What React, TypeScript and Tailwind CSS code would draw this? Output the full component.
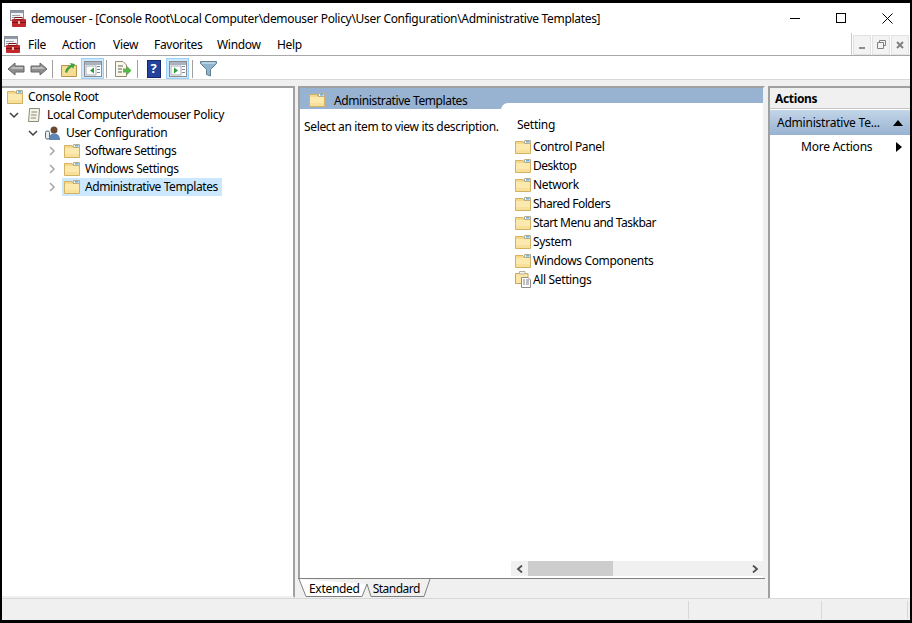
import React from 'react';

const font = { fontFamily: '"Noto Sans", sans-serif' };

function Folder({ className = '' }: { className?: string }) {
  return (
    <svg width="16" height="14" viewBox="0 0 16 14" className={className}>
      <path d="M0.5 1.5 H8 L9 3 H15.5 V13.5 H0.5 Z" fill="#f4d98c" stroke="#d2b263" />
      <rect x="1" y="4" width="14" height="9" fill="#fbe9ae" />
      <rect x="1" y="10" width="14" height="3" fill="#f8e09a" />
      <path d="M9.5 0.5 H15.5 V3.5 H9.5 Z" fill="#f7f7f2" stroke="#b9ad8a" />
      <rect x="11" y="1" width="3.5" height="1.6" fill="#6bb2e6" />
    </svg>
  );
}

function Chevron({ open }: { open?: boolean }) {
  return (
    <svg width="10" height="10" viewBox="0 0 10 10" className="shrink-0 ml-px">
      {open ? (
        <path d="M1 3 L5 7 L9 3" fill="none" stroke="#404040" strokeWidth="1.5" />
      ) : (
        <path d="M3 1 L7 5 L3 9" fill="none" stroke="#a6a6a6" strokeWidth="1.5" />
      )}
    </svg>
  );
}

function AppIcon({ className = '' }: { className?: string }) {
  return (
    <svg width="16" height="17" viewBox="0 0 16 17" className={className}>
      <rect x="0.5" y="0.5" width="13" height="10" fill="#f2f2f2" stroke="#8a8f98" />
      <rect x="1" y="1" width="12" height="2" fill="#8f99a8" />
      <rect x="2" y="5" width="8" height="1" fill="#9aa3ae" />
      <rect x="2" y="7" width="6" height="1" fill="#9aa3ae" />
      <rect x="2" y="9" width="14" height="8" rx="1" fill="#c0282d" />
      <rect x="5" y="7.5" width="7" height="2" fill="none" stroke="#7d1518" />
      <rect x="2" y="12" width="14" height="1" fill="#7d1518" />
      <rect x="8" y="11" width="2" height="3" fill="#f0c0b0" />
    </svg>
  );
}

function Sep({ className = '' }: { className?: string }) {
  return <div className={`w-px h-[18px] bg-[#a0a0a0] ${className}`} />;
}

function Arrow({ flip }: { flip?: boolean }) {
  return (
    <svg width="18" height="14" viewBox="0 0 18 14" className={flip ? 'scale-x-[-1]' : ''}>
      <path d="M1 7 L8 1 V4 H17 V10 H8 V13 Z" fill="#8f8f8f" stroke="#666666" />
      <path d="M3 7 L7 4 V5 H16 V7 Z" fill="#bdbdbd" />
    </svg>
  );
}

function ConsoleTree({ right }: { right?: boolean }) {
  return (
    <svg width="18" height="16" viewBox="0 0 18 16">
      <rect x="0.5" y="0.5" width="17" height="15" fill="#fff" stroke="#8c8c8c" />
      <rect x="1" y="1" width="16" height="3" fill="#a9b4c0" />
      <rect x="2" y="5" width="10" height="9" fill="#fff" stroke="#a3adb8" />
      <rect x="13" y="5" width="3" height="1" fill="#7c8a99" />
      <rect x="13" y="8" width="3" height="1" fill="#7c8a99" />
      <rect x="13" y="11" width="3" height="1" fill="#7c8a99" />
      {right ? <path d="M5 6.5 L9 9.5 L5 12.5 Z" fill="#2c9c3a" /> : <path d="M10 6.5 L6 9.5 L10 12.5 Z" fill="#2c9c3a" />}
    </svg>
  );
}

function TreeRow({ indent, chev, icon, label, selected, tracking = 'tracking-[-0.33px]' }: { indent: string; chev?: 'open' | 'closed'; icon: React.ReactNode; label: string; selected?: boolean; tracking?: string }) {
  return (
    <div className={`flex items-center h-[18px] ${indent}`}>
      {chev ? <div className="w-[16px] shrink-0 flex"><Chevron open={chev === 'open'} /></div> : null}
      <div className={`flex items-center h-[18px] pl-[1px] pr-[4px] ${selected ? 'bg-[#cce8ff]' : ''}`}>
        <div className="w-[22px] shrink-0 flex items-center justify-end pr-[5px]">{icon}</div>
        <span className={`whitespace-nowrap text-[12px] text-black ${tracking}`}>{label}</span>
      </div>
    </div>
  );
}

const settings = [
  { name: 'Control Panel', tracking: 'tracking-[-0.36px]' },
  { name: 'Desktop', tracking: 'tracking-[-0.48px]' },
  { name: 'Network', tracking: 'tracking-[-0.36px]' },
  { name: 'Shared Folders', tracking: 'tracking-[-0.5px]' },
  { name: 'Start Menu and Taskbar', tracking: 'tracking-[-0.5px]' },
  { name: 'System', tracking: 'tracking-[-0.36px]' },
  { name: 'Windows Components', tracking: 'tracking-[-0.36px]' },
];

export default function App() {
  return (
    <div className="w-[912px] h-[623px] bg-black pt-[3px] pb-[3px] px-[2px] overflow-hidden" style={font}>
      <div className="w-full h-full flex flex-col bg-[#f0f0f0]">
        {/* title bar */}
        <div className="h-[30px] shrink-0 bg-white flex items-center pl-[8px]">
          <AppIcon />
          <span className="ml-[5px] mt-[2px] text-[12px] tracking-[-0.31px] text-black whitespace-nowrap">demouser - [Console Root\Local Computer\demouser Policy\User Configuration\Administrative Templates]</span>
          <div className="ml-auto flex items-center h-full">
            <div className="w-[46px] flex justify-center"><div className="w-[10px] h-px bg-black" /></div>
            <div className="w-[46px] flex justify-center"><div className="w-[10px] h-[10px] border border-black" /></div>
            <div className="w-[46px] flex justify-center">
              <svg width="11" height="11" viewBox="0 0 11 11"><path d="M0.5 0.5 L10.5 10.5 M10.5 0.5 L0.5 10.5" stroke="#000" strokeWidth="1" /></svg>
            </div>
          </div>
        </div>
        {/* menu bar */}
        <div className="h-[23px] shrink-0 bg-white flex items-center border-b border-[#a8a8a8]">
          <AppIcon className="ml-[2px]" />
          <div className="flex ml-[8px] mt-[2px] text-[12px] tracking-[-0.3px] text-black">
            <span className="w-[34px]">File</span>
            <span className="w-[51px]">Action</span>
            <span className="w-[41px]">View</span>
            <span className="w-[63px]">Favorites</span>
            <span className="w-[60px]">Window</span>
            <span>Help</span>
          </div>
          <div className="ml-auto mr-[1px] flex items-center h-full border-l border-[#c8c8c8] pl-[1px] gap-[1px] pt-[1px]">
            {['min', 'restore', 'close'].map((k) => (
              <div key={k} className="w-[18px] h-[20px] bg-[#f3f3f3] border border-[#e2e2e2] flex items-center justify-center">
                {k === 'min' && <div className="w-[6px] h-[2px] bg-[#8c8c8c] mt-[6px]" />}
                {k === 'restore' && (
                  <svg width="9" height="9" viewBox="0 0 9 9"><path d="M2.5 2 V.5 H8.5 V5.5 H6.5 M.5 2.5 H6.5 V8.5 H.5 Z" fill="none" stroke="#808080" /></svg>
                )}
                {k === 'close' && (
                  <svg width="8" height="8" viewBox="0 0 8 8"><path d="M1 1 L7 7 M7 1 L1 7" stroke="#808080" strokeWidth="2" /></svg>
                )}
              </div>
            ))}
          </div>
        </div>
        {/* toolbar */}
        <div className="h-[24px] shrink-0 bg-white flex items-center pl-[5px] pt-[2px] border-b border-[#d8d8d8]">
          <Arrow />
          <div className="w-[5px]" />
          <Arrow flip />
          <Sep className="ml-[4px]" />
          <div className="ml-[4px] w-[23px] h-[22px] flex items-center justify-center">
            <svg width="16" height="16" viewBox="0 0 16 16">
              <path d="M.5 4.5 H15.5 V15.5 H.5 Z" fill="#f6dd94" stroke="#b8954a" />
              <path d="M4 11 C5 7 7 5 10 4 L9 2 L14 3 L12 8 L11 6 C9 7 7 9 6 12 Z" fill="#3fa33f" />
            </svg>
          </div>
          <div className="ml-[1px] w-[23px] h-[21px] bg-[#cce8ff] border border-[#99d1ff] flex items-center justify-center">
            <ConsoleTree />
          </div>
          <Sep className="ml-[2px]" />
          <div className="ml-[4px] w-[23px] h-[22px] flex items-center justify-center">
            <svg width="18" height="16" viewBox="0 0 18 16">
              <path d="M1.5 .5 H9 L12.5 4 V15.5 H1.5 Z" fill="#fbf8e6" stroke="#8c8c78" />
              <path d="M4 5 H9 M4 8 H8 M4 11 H8" stroke="#55606b" />
              <path d="M9 7.5 H13 V5 L17.5 9.5 L13 14 V11.5 H9 Z" fill="#56b848" />
            </svg>
          </div>
          <Sep className="ml-[3px]" />
          <div className="ml-[4px] w-[23px] h-[22px] flex items-center justify-center">
            <div className="w-[14px] h-[18px] bg-[#23439c] border border-[#15286b] flex items-center justify-center text-white text-[13px] font-bold leading-none">?</div>
          </div>
          <div className="ml-[1px] w-[23px] h-[21px] bg-[#cce8ff] border border-[#99d1ff] flex items-center justify-center">
            <ConsoleTree right />
          </div>
          <Sep className="ml-[3px]" />
          <div className="ml-[4px] w-[23px] h-[22px] flex items-center justify-center">
            <svg width="17" height="17" viewBox="0 0 17 17">
              <path d="M.5 1.5 H16.5 V3.5 L10.5 9.5 V16 L6.5 14.5 V9.5 L.5 3.5 Z" fill="#8fb4cc" stroke="#5f7f94" />
              <path d="M2 2.5 H15 V3.5 H2 Z" fill="#dcecf5" />
            </svg>
          </div>
        </div>
        {/* panes */}
        <div className="flex-1 min-h-0 flex pt-[6px]">
          {/* tree */}
          <div className="w-[293px] shrink-0 bg-white border-t-2 border-l-0 border-r-2 border-[#a0a0a0] border-b-2 border-b-[#f0f0f0] pl-[4px]">
            <TreeRow indent="-ml-px" icon={<Folder />} label="Console Root" />
            <TreeRow indent="pl-[2px]" chev="open" icon={
              <svg width="16" height="16" viewBox="0 0 16 16">
                <path d="M3.5 1.5 H13.5 V3 L12.5 14.5 H2.5 L3.5 3 Z" fill="#f5f2e6" stroke="#8a8a7a" />
                <path d="M5.5 5 H11 M5 8 H10.5 M4.8 11 H10" stroke="#8a8a7a" />
              </svg>
            } label="Local Computer\demouser Policy" />
            <TreeRow indent="pl-[21px]" chev="open" icon={
              <svg width="16" height="16" viewBox="0 0 16 16">
                <circle cx="9" cy="5" r="3.5" fill="#6b4a32" />
                <path d="M4 15 C4 10 6 8.5 9 8.5 C12 8.5 15 10 15 15 Z" fill="#5f86b5" />
                <rect x="0.5" y="6" width="4" height="8" rx="1.5" fill="#e8edf2" stroke="#4f6a85" />
              </svg>
            } label="User Configuration" />
            <TreeRow indent="pl-[40px]" chev="closed" icon={<Folder />} label="Software Settings" tracking="tracking-[-0.44px]" />
            <TreeRow indent="pl-[40px]" chev="closed" icon={<Folder />} label="Windows Settings" tracking="tracking-[-0.4px]" />
            <TreeRow indent="pl-[40px]" chev="closed" icon={<Folder />} label="Administrative Templates" tracking="tracking-[-0.41px]" selected />
          </div>
          <div className="w-[3px] shrink-0" />
          {/* center */}
          <div className="w-[467px] shrink-0 flex flex-col">
            <div className="flex-1 min-h-0 border-t-2 border-l-2 border-[#a0a0a0] border-r-2 border-r-[#f0f0f0] bg-white flex flex-col relative">
              <div className="h-[16px] shrink-0 bg-[#98b2d1] flex items-start pl-[9px]">
                <Folder className="mt-[5px] relative z-10" />
                <span className="ml-[9px] mt-[5px] text-[12px] tracking-[-0.39px] text-black leading-[16px] whitespace-nowrap relative z-10">Administrative Templates</span>
              </div>
              <div className="h-[5px] shrink-0 bg-[#98b2d1]" />
              <div className="flex-1 min-h-0 flex">
                <div className="w-[201px] shrink-0 bg-white pt-[4px] pl-[4px]">
                  <span className="text-[12px] tracking-[-0.34px] text-black whitespace-nowrap">Select an item to view its description.</span>
                </div>
                <div className="flex-1 min-w-0 flex flex-col bg-white rounded-tl-[7px] -mt-[6px] pl-[10px] pb-[2px] relative">
                  <div className="h-[34px] shrink-0 pl-[6px] pt-[13px] text-[12px] tracking-[-0.25px] text-black leading-[17px]">Setting</div>
                  <div className="flex-1 min-h-0">
                    {settings.map((s) => (
                      <div key={s.name} className="flex items-center h-[19px] pl-[4px]">
                        <div className="w-[18px] shrink-0 flex"><Folder /></div>
                        <span className={`text-[12px] text-black whitespace-nowrap ${s.tracking}`}>{s.name}</span>
                      </div>
                    ))}
                    <div className="flex items-center h-[19px] pl-[4px]">
                      <div className="w-[18px] shrink-0 flex">
                        <svg width="17" height="17" viewBox="0 0 17 17">
                          <path d="M.5 2.5 H13 V12.5 H.5 Z" fill="#fbe6a4" stroke="#c9a75a" />
                          <path d="M4.5 .5 H10 V3 H4.5 Z" fill="#f3f3f3" stroke="#b9b29a" />
                          <path d="M6.5 6.5 H13 L15.5 9 V16.5 H6.5 Z" fill="#fff" stroke="#8c8c8c" />
                          <path d="M8 9 H10 M11 9 H14 M8 11 H10 M11 11 H14 M8 13 H10 M11 13 H14" stroke="#808080" />
                        </svg>
                      </div>
                      <span className="text-[12px] tracking-[-0.36px] text-black whitespace-nowrap">All Settings</span>
                    </div>
                  </div>
                  {/* horizontal scrollbar */}
                  <div className="h-[15px] shrink-0 bg-[#f0f0f0] flex items-center">
                    <div className="w-[17px] flex justify-center">
                      <svg width="8" height="8" viewBox="0 0 8 8"><path d="M6 .5 L2 4 L6 7.5" fill="none" stroke="#505050" strokeWidth="1.8" /></svg>
                    </div>
                    <div className="w-[85px] h-full bg-[#cdcdcd]" />
                    <div className="flex-1" />
                    <div className="w-[17px] flex justify-center">
                      <svg width="8" height="8" viewBox="0 0 8 8"><path d="M2 .5 L6 4 L2 7.5" fill="none" stroke="#505050" strokeWidth="1.8" /></svg>
                    </div>
                  </div>
                </div>
              </div>
            </div>
            {/* tabs */}
            <div className="h-[20px] shrink-0 border-t border-t-[#808080] flex items-start relative">
              <svg width="140" height="20" viewBox="0 0 140 20" className="absolute left-0 top-[-1px]">
                <path d="M1 1 L8 18.5 H64 L69 6" fill="#fff" stroke="#808080" />
                <path d="M69 6 L73 18.5 H126 L132 1" fill="#f0f0f0" stroke="#808080" />
              </svg>
              <span className="relative ml-[11px] mt-[2px] text-[12px] tracking-[-0.3px] leading-[16px] text-black">Extended</span>
              <span className="relative ml-[13px] mt-[2px] text-[12px] tracking-[-0.5px] leading-[16px] text-black">Standard</span>
            </div>
          </div>
          <div className="w-[3px] shrink-0" />
          {/* actions */}
          <div className="flex-1 min-w-0 border-t-2 border-l-2 border-[#a0a0a0] bg-white flex flex-col">
            <div className="h-[21px] shrink-0 bg-[#f0f0f0] border-b border-[#c4c4c4] pl-[5px] text-[12px] font-bold tracking-[-0.35px] leading-[22px] text-black">Actions</div>
            <div className="h-[25px] shrink-0 bg-gradient-to-b from-[#c3d6e8] to-[#98b2d1] flex items-center pl-[7px] pr-[7px] mt-[1px]">
              <span className="text-[12px] tracking-[-0.22px] text-black whitespace-nowrap">Administrative Te...</span>
              <svg width="10" height="6" viewBox="0 0 10 6" className="ml-auto"><path d="M0 6 L5 0 L10 6 Z" fill="#000" /></svg>
            </div>
            <div className="h-[24px] shrink-0 flex items-center pl-[31px] pr-[8px]">
              <span className="text-[12px] tracking-[-0.22px] text-black whitespace-nowrap">More Actions</span>
              <svg width="6" height="10" viewBox="0 0 6 10" className="ml-auto"><path d="M0 0 L6 5 L0 10 Z" fill="#000" /></svg>
            </div>
          </div>
        </div>
        {/* status bar */}
        <div className="h-[22px] shrink-0 border-t border-[#d8d8d8] flex pt-[2px] pb-[1px] bg-[#f0f0f0]">
          <div className="w-[687px] border-r border-[#d8d8d8]" />
          <div className="w-[133px] border-r border-[#d8d8d8]" />
          <div className="w-[86px] border-r border-[#d8d8d8]" />
        </div>
      </div>
    </div>
  );
}
